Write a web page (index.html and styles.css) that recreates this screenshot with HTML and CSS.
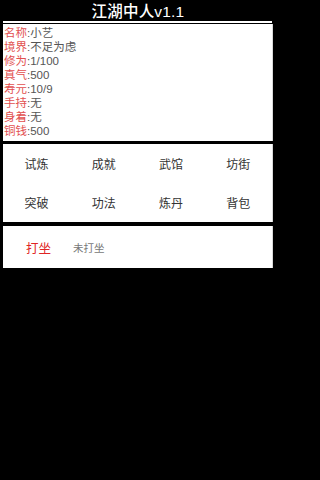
FILE: index.html
```html
<!DOCTYPE html>
<html lang="zh-CN">
<head>
<meta charset="utf-8">
<meta name="viewport" content="width=276">
<title>江湖中人v1.1</title>
<link rel="stylesheet" href="styles.css">
</head>
<body>
<main class="app">
  <header class="title-bar">江湖中人v1.1</header>
  <div class="title-rule"></div>
  <section class="panel stats">
    <div class="stat"><span class="label">名称</span>:<span class="value">小艺</span></div>
    <div class="stat"><span class="label">境界</span>:<span class="value">不足为虑</span></div>
    <div class="stat"><span class="label">修为</span>:<span class="value">1/100</span></div>
    <div class="stat"><span class="label">真气</span>:<span class="value">500</span></div>
    <div class="stat"><span class="label">寿元</span>:<span class="value">10/9</span></div>
    <div class="stat"><span class="label">手持</span>:<span class="value">无</span></div>
    <div class="stat"><span class="label">身着</span>:<span class="value">无</span></div>
    <div class="stat"><span class="label">铜钱</span>:<span class="value">500</span></div>
  </section>
  <section class="panel menu">
    <div class="menu-item">试炼</div>
    <div class="menu-item">成就</div>
    <div class="menu-item">武馆</div>
    <div class="menu-item">坊街</div>
    <div class="menu-item">突破</div>
    <div class="menu-item">功法</div>
    <div class="menu-item">炼丹</div>
    <div class="menu-item">背包</div>
  </section>
  <section class="panel meditate">
    <span class="action">打坐</span>
    <span class="status">未打坐</span>
  </section>
</main>
</body>
</html>
```
FILE: styles.css
```css
html, body {
  margin: 0;
  padding: 0;
  background: #000;
  font-family: "Liberation Sans", "Noto Sans CJK SC", sans-serif;
}

.app {
  width: 276px;
  height: 480px;
}

.title-bar {
  height: 21px;
  box-sizing: border-box;
  padding-top: 3px;
  line-height: 18px;
  font-size: 15.5px;
  font-weight: 500;
  color: #fff;
  text-align: center;
  letter-spacing: 0.2px;
}

.title-rule {
  height: 2px;
  margin: 0 4px 1px 3px;
  background: #fff;
}

.panel {
  margin: 0 3px 0 3px;
  background: #fff;
  box-sizing: border-box;
  border-right: 1px solid #d8d8d8;
}

.stats {
  height: 117px;
  padding: 2px 0 0 1px;
}

.stat {
  height: 14px;
  line-height: 14px;
  font-size: 11.5px;
  color: #555;
  white-space: nowrap;
}

.stat .label {
  color: #e25050;
}

.stat .value {
  color: #555;
}

.menu {
  margin-top: 3px;
  height: 78px;
  display: grid;
  grid-template-columns: repeat(4, 1fr);
  grid-template-rows: repeat(2, 1fr);
}

.menu-item {
  display: flex;
  align-items: center;
  justify-content: center;
  font-size: 12px;
  color: #333;
}

.meditate {
  margin-top: 4px;
  height: 42px;
  display: flex;
  align-items: center;
  padding-left: 23px;
  gap: 22px;
}

.meditate .action {
  font-size: 12.5px;
  color: #e02424;
}

.meditate .status {
  font-size: 10.5px;
  color: #777;
}
```
